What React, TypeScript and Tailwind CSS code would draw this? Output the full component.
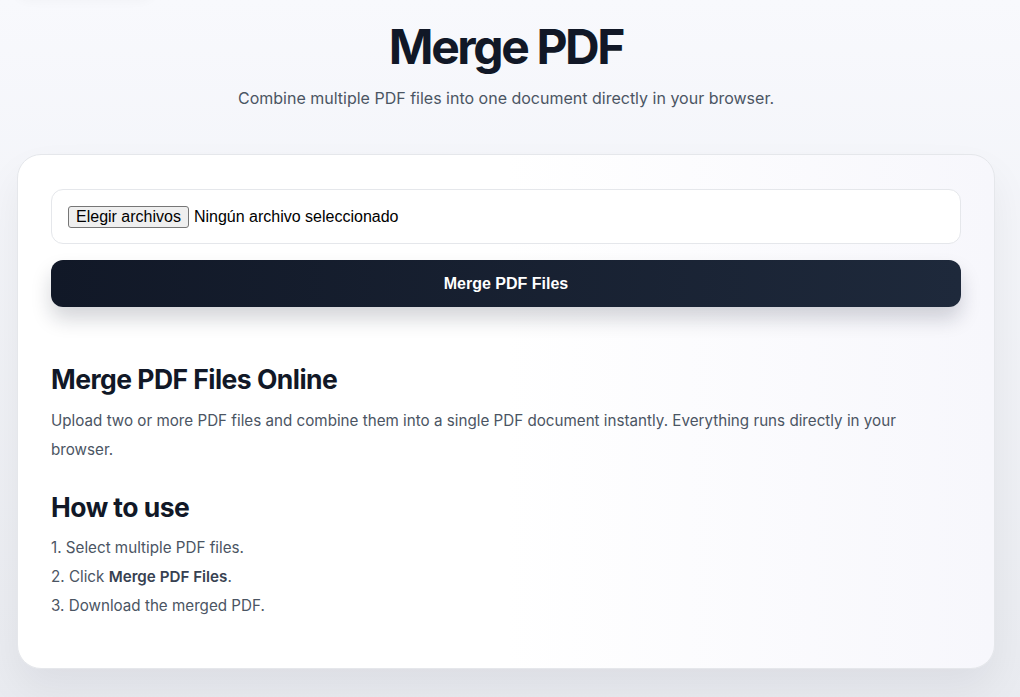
import React from 'react';

export default function App() {
  return (
    <div className="relative min-h-[697px] w-full overflow-hidden bg-gradient-to-b from-[#f8f9fd] to-[#e9ebf0] font-['Inter',sans-serif] pb-8">
      {/* faint leftover of a header pill above the fold */}
      <div className="absolute left-[10px] top-[-44px] h-[44px] w-[150px] rounded-full bg-[#f7f8fc] shadow-[0_3px_10px_rgba(15,23,42,0.025)]" />

      <div className="pl-[17px] pr-[25px] pt-[21px]">
        {/* Header */}
        <header className="text-center">
          <h1 className="text-[48px] leading-[52px] font-bold tracking-[-0.05em] text-[#111827]">
            Merge PDF
          </h1>
          <p className="mt-[13px] text-[16px] leading-6 text-[#4b5563]">
            Combine multiple PDF files into one document directly in your browser.
          </p>
        </header>

        {/* Card */}
        <main className="mt-[44px] rounded-[24px] border border-[#e5e7eb] bg-gradient-to-r from-white via-white to-[#f7f7fc] px-[33px] pt-[34px] pb-[48px] shadow-[0_20px_40px_rgba(15,23,42,0.06)]">
          <div className="flex h-[55px] items-center rounded-xl border border-[#e5e7eb] bg-white px-4 font-['Liberation_Sans',Arial,sans-serif] text-[16px] text-black">
            <span className="rounded-[3px] border border-[#767676] bg-[#efefef] px-[7px] py-[1px] leading-[18px]">
              Elegir archivos
            </span>
            <span className="ml-[5px]">Ningún archivo seleccionado</span>
          </div>

          <button className="mt-4 flex h-[47px] w-full items-center justify-center rounded-xl bg-gradient-to-r from-[#111827] to-[#1e293b] font-['Liberation_Sans',Arial,sans-serif] text-[16px] font-bold text-white shadow-[0_12px_20px_rgba(15,23,42,0.18)]">
            Merge PDF Files
          </button>

          <section className="mt-[55px]">
            <h2 className="text-[26.5px] leading-[34px] font-bold tracking-[-0.02em] text-[#111827]">
              Merge PDF Files Online
            </h2>
            <p className="mt-[10px] text-[15.2px] leading-[29px] text-[#4b5563]">
              Upload two or more PDF files and combine them into a single PDF document instantly. Everything runs directly in your browser.
            </p>

            <h2 className="mt-[26px] text-[26.5px] leading-[34px] font-bold tracking-[-0.02em] text-[#111827]">
              How to use
            </h2>
            <ol className="mt-[9px] text-[15.2px] leading-[29px] text-[#4b5563]">
              <li>1. Select multiple PDF files.</li>
              <li>
                2. Click <strong className="font-semibold text-[#374151]">Merge PDF Files</strong>.
              </li>
              <li>3. Download the merged PDF.</li>
            </ol>
          </section>
        </main>
      </div>
    </div>
  );
}
